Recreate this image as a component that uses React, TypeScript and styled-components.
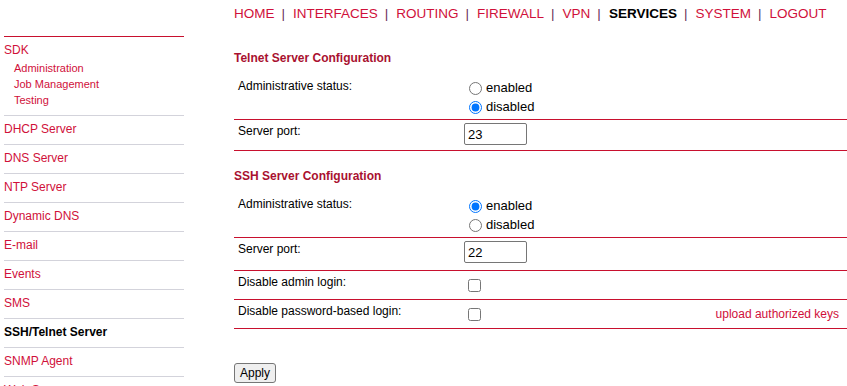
import { createGlobalStyle } from 'styled-components'
import styled from 'styled-components'

const GlobalStyle = createGlobalStyle`
  body {
    margin: 0;
    background: #fff;
    font-family: 'Liberation Sans', Arial, sans-serif;
    color: #000;
  }
`

const RED = '#c8102e'
const LINK = '#d0103a'

const Page = styled.div`
  display: flex;
  align-items: flex-start;
`

const Sidebar = styled.nav`
  width: 180px;
  margin: 36px 0 0 4px;
  border-top: 1px solid ${RED};
`

const SideGroup = styled.div`
  padding: 5px 0 7px;
  border-bottom: 1px solid #d3d3db;
`

const SideLink = styled.a<{ $active?: boolean; $plain?: boolean }>`
  display: block;
  font-size: 12px;
  line-height: 16px;
  color: ${(p) => (p.$active ? '#000' : LINK)};
  font-weight: ${(p) => (p.$active ? 700 : 400)};
  text-decoration: none;
  padding: ${(p) => (p.$plain ? '0' : '5px 0 7px')};
  border-bottom: ${(p) => (p.$plain ? 'none' : '1px solid #d3d3db')};
`

const SubList = styled.div`
  margin-top: 2px;
  padding-left: 10px;
`

const SubLink = styled.a`
  display: block;
  font-size: 11px;
  line-height: 16px;
  color: ${LINK};
  text-decoration: none;
`

const Main = styled.main`
  flex: 1;
  margin-left: 50px;
`

const TopNav = styled.div`
  display: flex;
  padding-top: 6px;
  margin-bottom: 28px;
  font-size: 13.5px;
  line-height: 16px;
`

const NavLink = styled.a<{ $active?: boolean }>`
  color: ${(p) => (p.$active ? '#000' : LINK)};
  font-weight: ${(p) => (p.$active ? 700 : 400)};
  text-decoration: none;
`

const Sep = styled.span`
  margin: 0 8px 0 7px;
  color: #6a2c5a;
`

const SectionTitle = styled.h3<{ $first?: boolean }>`
  margin: ${(p) => (p.$first ? '0 0 9px' : '17px 0 9px')};
  font-size: 12px;
  line-height: 16px;
  font-weight: 700;
  color: #a91130;
`

const Row = styled.div<{ $tall?: boolean }>`
  display: grid;
  grid-template-columns: 230px auto 1fr;
  align-items: start;
  padding: ${(p) => (p.$tall ? '3px 0 5px' : '3px 0')};
  border-bottom: 1px solid ${RED};
  font-size: 12px;
  line-height: 16px;
`

const Label = styled.div`
  padding-left: 4px;
`

const Value = styled.div`
  display: flex;
  flex-direction: column;
  min-height: 22px;
  justify-content: center;
`

const RadioLine = styled.label`
  display: flex;
  align-items: center;
  height: 19px;
  font-size: 13px;

  input {
    margin: 1px 4px 0 5px;
  }
`

const Check = styled.input`
  margin: 0 3px 0 4px;
  width: 13px;
  height: 13px;
`

const PortInput = styled.input`
  box-sizing: border-box;
  width: 63px;
  height: 22px;
  margin: 0 0 2px;
  padding: 1px 3px;
  font-family: 'Liberation Sans', Arial, sans-serif;
  font-size: 13px;
  border: 1px solid #767676;
  border-radius: 2px;
`

const Extra = styled.a`
  justify-self: end;
  align-self: center;
  padding-right: 8px;
  font-size: 12px;
  color: ${LINK};
  text-decoration: none;
`

const ApplyButton = styled.button`
  display: block;
  margin-top: 34px;
  padding: 2px 5px;
  font-family: 'Liberation Sans', Arial, sans-serif;
  font-size: 12px;
  line-height: 14px;
  background: #efefef;
  border: 1px solid #767676;
  border-radius: 3px;
  color: #000;
`

const navItems = ['HOME', 'INTERFACES', 'ROUTING', 'FIREWALL', 'VPN', 'SERVICES', 'SYSTEM', 'LOGOUT']

const sideItems = [
  'DHCP Server',
  'DNS Server',
  'NTP Server',
  'Dynamic DNS',
  'E-mail',
  'Events',
  'SMS',
  'SSH/Telnet Server',
  'SNMP Agent',
  'Web Server',
]

function StatusRow({ name, enabled }: { name: string; enabled: boolean }) {
  return (
    <Row>
      <Label>Administrative status:</Label>
      <Value>
        <RadioLine>
          <input type='radio' name={name} defaultChecked={enabled} />
          enabled
        </RadioLine>
        <RadioLine>
          <input type='radio' name={name} defaultChecked={!enabled} />
          disabled
        </RadioLine>
      </Value>
    </Row>
  )
}

export default function App() {
  return (
    <>
      <GlobalStyle />
      <Page>
        <Sidebar>
          <SideGroup>
            <SideLink $plain>SDK</SideLink>
            <SubList>
              <SubLink>Administration</SubLink>
              <SubLink>Job Management</SubLink>
              <SubLink>Testing</SubLink>
            </SubList>
          </SideGroup>
          {sideItems.map((item) => (
            <SideLink key={item} $active={item === 'SSH/Telnet Server'}>
              {item}
            </SideLink>
          ))}
        </Sidebar>
        <Main>
          <TopNav>
            {navItems.map((item, i) => (
              <span key={item}>
                <NavLink $active={item === 'SERVICES'}>{item}</NavLink>
                {i < navItems.length - 1 && <Sep>|</Sep>}
              </span>
            ))}
          </TopNav>

          <SectionTitle $first>Telnet Server Configuration</SectionTitle>
          <StatusRow name='telnet' enabled={false} />
          <Row>
            <Label>Server port:</Label>
            <Value>
              <PortInput defaultValue='23' />
            </Value>
          </Row>

          <SectionTitle>SSH Server Configuration</SectionTitle>
          <StatusRow name='ssh' enabled={true} />
          <Row $tall>
            <Label>Server port:</Label>
            <Value>
              <PortInput defaultValue='22' />
            </Value>
          </Row>
          <Row>
            <Label>Disable admin login:</Label>
            <Value>
              <Check type='checkbox' />
            </Value>
          </Row>
          <Row>
            <Label>Disable password-based login:</Label>
            <Value>
              <Check type='checkbox' />
            </Value>
            <Extra>upload authorized keys</Extra>
          </Row>

          <ApplyButton>Apply</ApplyButton>
        </Main>
      </Page>
    </>
  )
}
